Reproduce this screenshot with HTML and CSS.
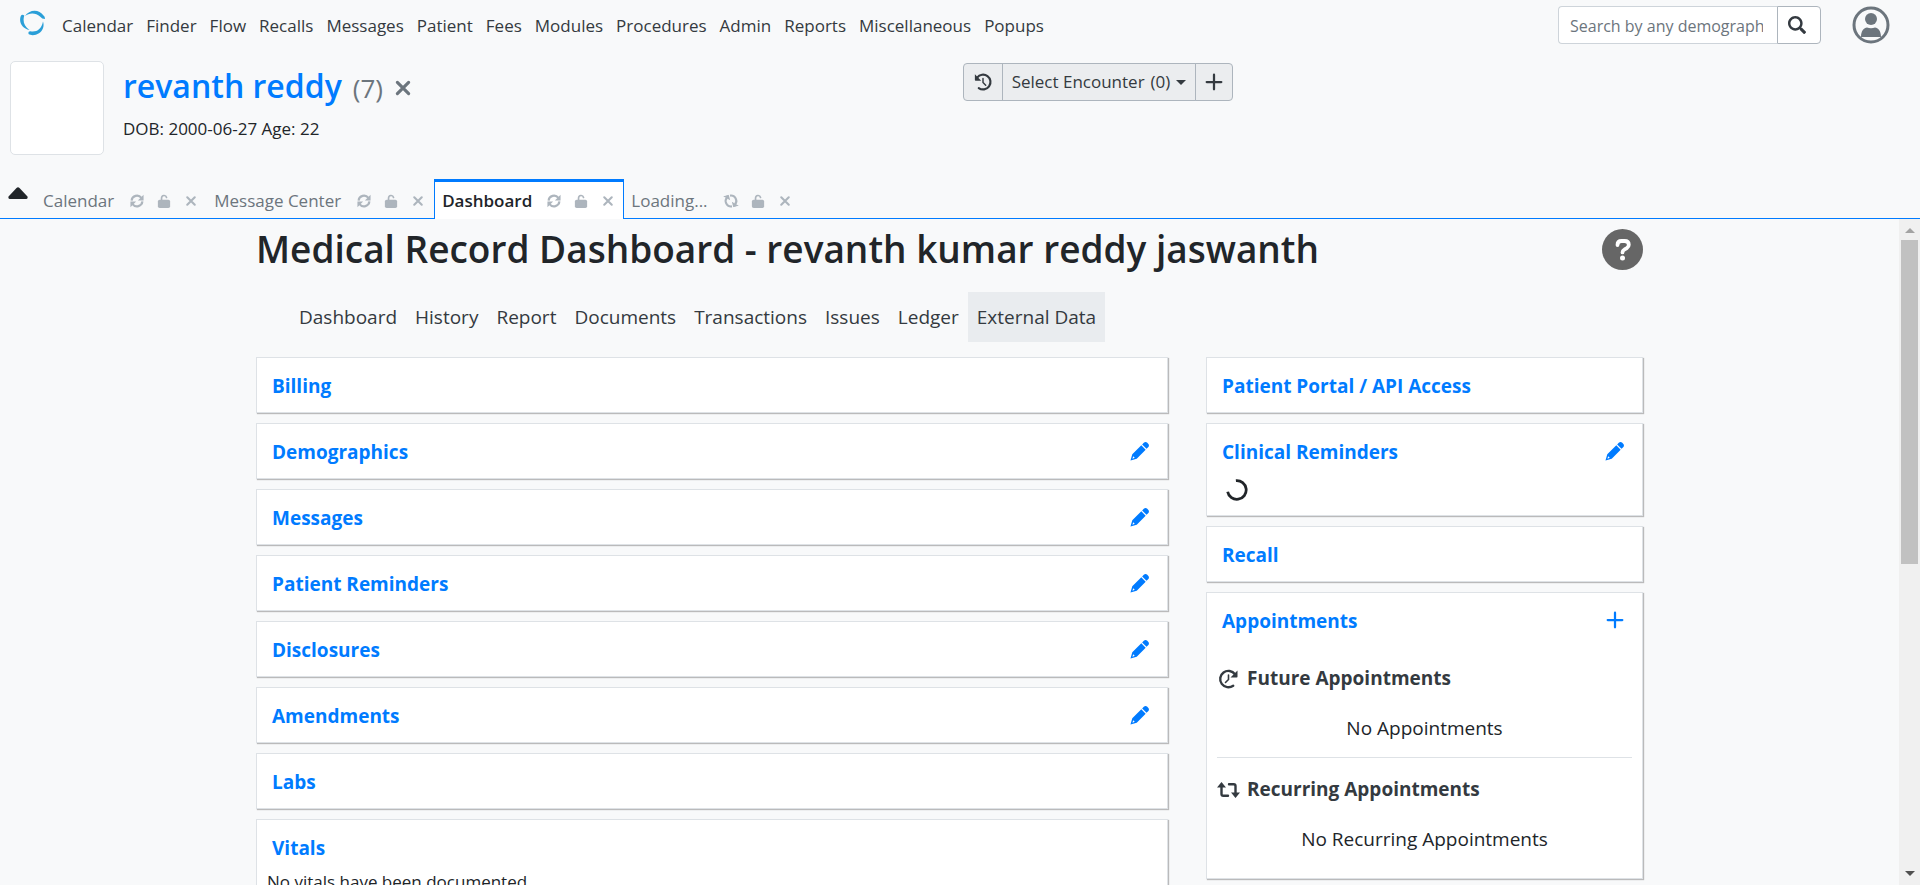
FILE: index.html
```html
<!DOCTYPE html>
<html lang="en">
<head>
<meta charset="utf-8">
<title>Medical Record Dashboard</title>
<link rel="stylesheet" href="styles.css">
</head>
<body>
<svg class="sprite" aria-hidden="true">
  <symbol id="i-sync" viewBox="0 0 16 16"><g fill="none" stroke="currentColor" stroke-width="2.400"><path d="M1.800 7.500A6.200 6.200 0 0 1 13 4.500"/><path d="M14.200 8.500A6.200 6.200 0 0 1 3 11.500"/></g><path d="M15.500 .8v6.500H9zM.5 15.200V8.700H7z"/></symbol>
  <symbol id="i-unlock" viewBox="0 0 14 16"><path d="M4.200 7V4.500a2.900 2.900 0 0 1 5.700-.6" fill="none" stroke="currentColor" stroke-width="1.900" stroke-linecap="round"/><rect x="0" y="6.500" width="14" height="9.500" rx="2"/></symbol>
  <symbol id="i-times" viewBox="0 0 16 16"><path d="M3 3l10 10M13 3L3 13" fill="none" stroke="currentColor" stroke-width="2.800" stroke-linecap="round"/></symbol>
  <symbol id="i-plus" viewBox="0 0 16 16"><path d="M8 1.500v13M1.500 8h13" fill="none" stroke="currentColor" stroke-width="2" stroke-linecap="round"/></symbol>
  <symbol id="i-history" viewBox="0 0 20 20"><path d="M3.500 5.200A8.200 8.200 0 1 1 5.300 16.700" fill="none" stroke="currentColor" stroke-width="2.400" stroke-linecap="round"/><path d="M1 1.500v6.200q0 .8.800.8H8z"/><path d="M10 6v4.500l3 3" fill="none" stroke="currentColor" stroke-width="1.600" stroke-linecap="round"/></symbol>
  <symbol id="i-retweet" viewBox="0 0 23 16"><g fill="none" stroke="currentColor" stroke-width="2.400" stroke-linecap="round" stroke-linejoin="round"><path d="M4.500 4v8q0 1.800 1.800 1.800H11"/><path d="M18.500 12V4q0-1.800-1.800-1.800H12"/></g><path d="M4.500 0L9 5.500H0zM18.500 16L14 10.500h9z"/></symbol>
  <symbol id="i-pencil" viewBox="0 0 20 20"><path d="M12.800 2.600l1.700-1.700q1.900-1.700 3.700 0l.9.900q1.700 1.800 0 3.700l-1.700 1.700zM11.900 3.500l4.600 4.600-9.400 9.500L.5 19.500 2.400 12.900z"/><path d="M3.300 15l1.700 1.700-2.400.8z" fill="#fff"/></symbol>
  <symbol id="i-search" viewBox="0 0 512 512"><path d="M505 442.700L405.300 343c-4.500-4.500-10.600-7-17-7H372c27.600-35.300 44-79.700 44-128C416 93.100 322.900 0 208 0S0 93.100 0 208s93.100 208 208 208c48.300 0 92.700-16.400 128-44v16.300c0 6.400 2.500 12.500 7 17l99.700 99.700c9.400 9.400 24.600 9.400 33.900 0l28.300-28.300c9.400-9.400 9.400-24.600.1-34zM208 346c-76 0-138-62-138-138S132 70 208 70s138 62 138 138-62 138-138 138z"/></symbol>
  <symbol id="i-question" viewBox="0 0 41 41"><circle cx="20.500" cy="20.500" r="20.500"/><path d="M15.500 16q0-4 4-4h3q4.300 0 4.300 3.800 0 2-2 3.300l-2.500 1.500q-1.800 1-1.800 2.800" fill="none" stroke="#fff" stroke-width="3.800" stroke-linecap="round"/><circle cx="20.500" cy="29" r="2.500" fill="#fff"/></symbol>
</svg>

<header class="topbar">
  <svg class="logo" viewBox="0 0 26 26" aria-label="Home" role="img">
    <path d="M5 6C9-.5 19-1.500 23.500 5.500q1.500.5 1.500 3.500-3 0-5-2.500C16 2.500 9 2.500 5 6z"/>
    <path d="M.8 6Q2 4 4.300 5.500C2.500 11 4 16.500 9.500 20 2 18.500-1.500 12 .8 6z"/>
    <path d="M8.500 22q1-1 3-.6C17 22 21.500 19 23 11.500c1.500 4.500 0 9-4 11.800-3.500 2.200-8 2.400-10.500.7z"/>
  </svg>
  <nav class="menu" aria-label="Main">
    <a href="#">Calendar</a><a href="#">Finder</a><a href="#">Flow</a><a href="#">Recalls</a><a href="#">Messages</a><a href="#">Patient</a><a href="#">Fees</a><a href="#">Modules</a><a href="#">Procedures</a><a href="#">Admin</a><a href="#">Reports</a><a href="#">Miscellaneous</a><a href="#">Popups</a>
  </nav>
  <form class="search">
    <input type="text" aria-label="Search" placeholder="Search by any demographics">
    <button type="button" aria-label="Search"><svg class="ic18"><use href="#i-search"/></svg></button>
  </form>
  <button class="account" type="button" aria-label="Account">
    <svg viewBox="0 0 38 38"><circle cx="19" cy="19" r="17" fill="none" stroke="currentColor" stroke-width="3"/><circle cx="19" cy="13" r="6"/><path d="M9 31c0-6 3-9.500 6-9.500 2.500 1 5.500 1 8 0 3 0 6 3.500 6 9.500z"/></svg>
  </button>
</header>

<section class="patient">
  <div class="photo"></div>
  <div class="who">
    <div class="name-row">
      <a class="name" href="#">revanth reddy</a>
      <span class="pid">(7)</span>
      <button class="clear" type="button" aria-label="Clear patient"><svg><use href="#i-times"/></svg></button>
    </div>
    <div class="dob">DOB: 2000-06-27 Age: 22</div>
  </div>
  <div class="encounter">
    <button type="button" aria-label="Visit history"><svg class="ic18"><use href="#i-history"/></svg></button>
    <button class="pick" type="button"><span>Select Encounter</span><span>(0)</span><span class="caret"></span></button>
    <button type="button" aria-label="New encounter"><svg class="ic18"><use href="#i-plus"/></svg></button>
  </div>
</section>

<div class="tabs">
  <button class="collapse" type="button" aria-label="Collapse"><svg viewBox="0 0 20 12"><path d="M8.500 1Q10-.5 11.500 1L19.500 9.500Q20 12 18 12H2Q0 12 .5 9.500z"/></svg></button>
  <div class="tab"><span>Calendar</span><button type="button" aria-label="Refresh"><svg><use href="#i-sync"/></svg></button><button type="button" aria-label="Lock"><svg><use href="#i-unlock"/></svg></button><button type="button" aria-label="Close"><svg><use href="#i-times"/></svg></button></div>
  <div class="tab"><span>Message Center</span><button type="button" aria-label="Refresh"><svg><use href="#i-sync"/></svg></button><button type="button" aria-label="Lock"><svg><use href="#i-unlock"/></svg></button><button type="button" aria-label="Close"><svg><use href="#i-times"/></svg></button></div>
  <div class="tab active"><span>Dashboard</span><button type="button" aria-label="Refresh"><svg><use href="#i-sync"/></svg></button><button type="button" aria-label="Lock"><svg><use href="#i-unlock"/></svg></button><button type="button" aria-label="Close"><svg><use href="#i-times"/></svg></button></div>
  <div class="tab"><span>Loading...</span><button class="spin" type="button" aria-label="Refresh"><svg><use href="#i-sync"/></svg></button><button type="button" aria-label="Lock"><svg><use href="#i-unlock"/></svg></button><button type="button" aria-label="Close"><svg><use href="#i-times"/></svg></button></div>
  <div class="tab-fill"></div>
</div>

<div class="frame">
  <main class="page">
    <div class="container">
      <div class="title-row">
        <h1>Medical Record Dashboard - revanth kumar reddy jaswanth</h1>
        <a class="help" href="#" aria-label="Help"><svg><use href="#i-question"/></svg></a>
      </div>
      <nav class="subnav" aria-label="Patient record">
        <a href="#">Dashboard</a><a href="#">History</a><a href="#">Report</a><a href="#">Documents</a><a href="#">Transactions</a><a href="#">Issues</a><a href="#">Ledger</a><a class="current" href="#">External Data</a>
      </nav>
      <div class="columns">
        <div class="column">
          <section class="card"><div class="card-head"><a href="#">Billing</a></div></section>
          <section class="card"><div class="card-head"><a href="#">Demographics</a><a href="#" aria-label="Edit"><svg><use href="#i-pencil"/></svg></a></div></section>
          <section class="card"><div class="card-head"><a href="#">Messages</a><a href="#" aria-label="Edit"><svg><use href="#i-pencil"/></svg></a></div></section>
          <section class="card"><div class="card-head"><a href="#">Patient Reminders</a><a href="#" aria-label="Edit"><svg><use href="#i-pencil"/></svg></a></div></section>
          <section class="card"><div class="card-head"><a href="#">Disclosures</a><a href="#" aria-label="Edit"><svg><use href="#i-pencil"/></svg></a></div></section>
          <section class="card"><div class="card-head"><a href="#">Amendments</a><a href="#" aria-label="Edit"><svg><use href="#i-pencil"/></svg></a></div></section>
          <section class="card"><div class="card-head"><a href="#">Labs</a></div></section>
          <section class="card"><div class="card-head"><a href="#">Vitals</a></div><p class="note">No vitals have been documented</p></section>
        </div>
        <div class="column">
          <section class="card"><div class="card-head"><a href="#">Patient Portal / API Access</a></div></section>
          <section class="card"><div class="card-head"><a href="#">Clinical Reminders</a><a href="#" aria-label="Edit"><svg><use href="#i-pencil"/></svg></a></div>
            <svg class="spinner" viewBox="0 0 20 20"><path d="M9 1.500A8.500 8.500 0 1 1 1.500 11.500" fill="none" stroke="#212529" stroke-width="2.500"/></svg>
          </section>
          <section class="card"><div class="card-head"><a href="#">Recall</a></div></section>
          <section class="card"><div class="card-head"><a href="#">Appointments</a><a class="add" href="#" aria-label="Add"><svg><use href="#i-plus"/></svg></a></div>
            <div class="appts">
              <h2><svg class="flip"><use href="#i-history"/></svg>Future Appointments</h2>
              <p>No Appointments</p>
              <hr>
              <h2><svg><use href="#i-retweet"/></svg>Recurring Appointments</h2>
              <p>No Recurring Appointments</p>
            </div>
          </section>
        </div>
      </div>
    </div>
  </main>
  <div class="scrollbar">
    <span class="up"></span>
    <div class="track"><div class="thumb"></div></div>
    <span class="down"></span>
  </div>
</div>
</body>
</html>
```
FILE: styles.css
```css
* { box-sizing: border-box; }
body {
  margin: 0;
  height: 100vh;
  display: flex;
  flex-direction: column;
  overflow: hidden;
  background: #f8f9fa;
  color: #212529;
  font: 17px/24px "Open Sans", "Noto Sans", sans-serif;
}
a { color: inherit; text-decoration: none; }
button { font: inherit; color: inherit; background: none; border: 0; padding: 0; display: flex; align-items: center; justify-content: center; }
svg { fill: currentColor; display: block; }
h1, h2, p { margin: 0; }
.sprite { display: none; }
.ic18 { width: 18px; height: 18px; }

.topbar { display: flex; align-items: center; height: 50px; padding: 0 30px 0 20px; flex: none; }
.logo { width: 26px; height: 26px; margin: 0 16px 4px 0; color: #2a9fd8; }
.menu { display: flex; gap: 13px; flex: 1; color: #343a40; padding-top: 1px; }
.search { display: flex; height: 38px; }
.search input {
  width: 219px;
  border: 1px solid #ced4da;
  border-right: 0;
  border-radius: 4px 0 0 4px;
  padding: 1px 14px 0 11px;
  font: inherit;
  font-size: 16px;
  background: #fff;
}
.search input::placeholder { color: #6c757d; opacity: 1; }
.search button { width: 44px; background: #fff; color: #343a40; border: 1px solid #adb5bd; border-radius: 0 4px 4px 0; padding-right: 4px; }
.account { width: 38px; height: 38px; margin-left: 31px; color: #6c757d; }
.account svg { width: 38px; height: 38px; }

.patient { display: flex; height: 129px; padding: 11px 10px 0; flex: none; position: relative; }
.photo { width: 94px; height: 94px; background: #fff; border: 1px solid #dee2e6; border-radius: 5px; }
.who { padding-left: 19px; }
.name-row { display: flex; align-items: center; gap: 11px; height: 50px; line-height: 50px; }
.name { font-size: 32px; font-weight: 600; color: #007bff; }
.pid { font-size: 26px; color: #6c757d; padding-top: 3px; }
.clear { color: #6c757d; }
.clear svg { width: 18px; height: 18px; margin-top: 3px; }
.dob { padding-top: 6px; }
.encounter { position: absolute; left: 963px; top: 13px; display: flex; color: #343a40; }
.encounter button { height: 38px; width: 38px; background: #ebedef; border: 1px solid #adb5bd; margin-right: -1px; }
.encounter button:first-child { width: 40px; border-radius: 4px 0 0 4px; }
.encounter button:last-child { border-radius: 0 4px 4px 0; }
.encounter .pick { width: 194px; gap: 6px; }
.caret { border: 5px solid transparent; border-top-color: currentColor; border-bottom: 0; }

.tabs { display: flex; align-items: stretch; height: 40px; flex: none; color: #6c757d; }
.collapse { width: 36px; border-bottom: 1px solid #007bff; color: #212529; padding-bottom: 12px; }
.collapse svg { width: 20px; height: 12px; }
.tab { display: flex; align-items: center; gap: 13px; padding: 4px 9px 0 7px; border-bottom: 1px solid #007bff; }
.tab span { margin-right: 3px; }
.tab button { width: 14px; color: #adb5bd; }
.tab svg { width: 14px; height: 14px; }
.tab button:last-child svg { width: 12px; height: 12px; }
.tab.active { background: #fff; color: #212529; font-weight: 600; border: 1px solid #007bff; border-top-width: 3px; border-bottom: 0; padding: 1px 8px 0 7px; }
.tab.active span { margin-right: 2px; }
.tab .spin svg { transform: rotate(75deg); }
.tab-fill { flex: 1; border-bottom: 1px solid #007bff; }

.frame { flex: 1; display: flex; min-height: 0; }
.page { flex: 1; overflow: hidden; font-size: 19px; line-height: 27px; }
.container { max-width: 1387px; margin: 0 auto; }
.title-row { display: flex; justify-content: space-between; align-items: center; height: 60px; margin-bottom: 13px; }
h1 { font-size: 37px; line-height: 60px; font-weight: 600; white-space: nowrap; }
.help { color: #666; }
.help svg { width: 41px; height: 41px; }
.subnav { display: flex; padding-left: 34px; margin-bottom: 15px; color: #343a40; }
.subnav a { padding: 12px 9px 11px; }
.subnav .current { background: #e9ecef; }
.columns { display: grid; grid-template-columns: 912fr 437fr; gap: 38px; align-items: start; }
.column { display: flex; flex-direction: column; gap: 10px; }
.card { background: #fff; border: 1px solid #dee2e6; box-shadow: 1px 1px 1px rgba(0, 0, 0, .25); padding: 0 10px; min-height: 56px; }
.card-head { display: flex; justify-content: space-between; align-items: center; height: 54px; padding: 2px 8px 0 5px; color: #007bff; font-weight: 700; }
.card-head svg { width: 19px; height: 19px; margin-bottom: 2px; }
.card-head .add svg { width: 18px; height: 18px; }
.note { font-size: 17px; line-height: 16px; }
.spinner { width: 22px; height: 22px; margin: 1px 0 14px 9px; }
.appts { padding: 1px 0 25px; }
.appts h2 { display: flex; align-items: center; gap: 7px; font-size: 19px; line-height: 27px; font-weight: 700; color: #343a40; padding-top: 17px; }
.appts h2 svg { width: 23px; height: 20px; }
.appts .flip { transform: scaleX(-1); }
.appts p { text-align: center; padding-top: 23px; }
.appts hr { border: 0; border-top: 1px solid #dee2e6; margin: 15px 0 1px; }

.scrollbar { width: 21px; flex: none; background: #f0f0f0; display: flex; flex-direction: column; align-items: center; }
.up { border: 5px solid transparent; border-bottom-color: #a3a3a3; border-top: 0; margin: 9px 0 7px; }
.down { border: 5px solid transparent; border-top-color: #505050; border-bottom: 0; margin: 7px 0 9px; }
.track { flex: 1; width: 17px; }
.thumb { height: 52%; background: #c1c1c1; }
```
